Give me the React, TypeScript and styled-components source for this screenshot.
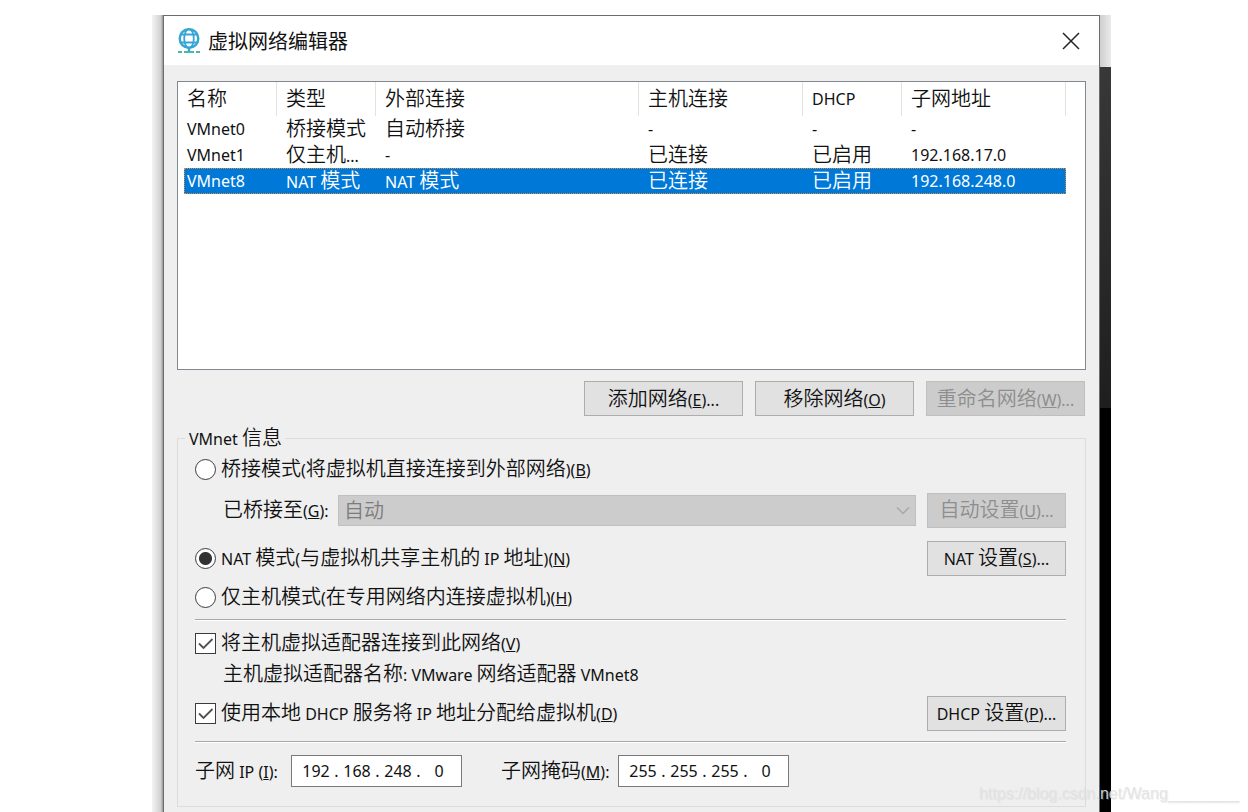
import React from "react";
import styled, { createGlobalStyle } from "styled-components";

const latin = '"Noto Sans", "Noto Sans CJK SC", sans-serif';
const han = '"Noto Sans CJK SC", "Noto Sans", sans-serif';

const GlobalStyle = createGlobalStyle`
  * { box-sizing: border-box; }
  body {
    margin: 0;
    background: #fff;
    color: #111;
    font-family: ${latin};
    font-size: 16px;
    line-height: 24px;
  }
`;

const Page = styled.div`
  position: relative;
  display: flex;
  min-height: 100vh;
  padding: 15px 137px 0 152px;
`;

const LeftBackdrop = styled.div`
  flex: none;
  width: 11px;
  background: linear-gradient(to right, #f3f3f3, #d0d0d0 9px, #a4a4a4 10px);
`;

const RightBackdrop = styled.div`
  flex: none;
  width: 11px;
  background:
    linear-gradient(to right, #cfcfcf, #eaeaea) 0 0 / 100% 52px no-repeat,
    linear-gradient(#383838, #1e1e1e) 0 52px / 100% 341px no-repeat,
    #000;
`;

const Dialog = styled.main`
  flex: 1;
  min-width: 0;
  display: flex;
  flex-direction: column;
  border: 1px solid #6c6c6c;
  border-bottom: 0;
  background: #efefef;
`;

const TitleBar = styled.header`
  display: flex;
  align-items: center;
  height: 49px;
  padding: 0 15px 0 13px;
  background: #fff;
`;

const Title = styled.h1`
  flex: 1;
  margin: 0 0 0 7px;
  font: 400 20px/28px ${han};
`;

const CloseButton = styled.button`
  display: grid;
  place-items: center;
  width: 26px;
  height: 26px;
  padding: 0;
  border: 0;
  background: none;
`;

const Body = styled.div`
  display: flex;
  flex-direction: column;
  padding: 16px 13px 6px;
`;

const ListBox = styled.div`
  height: 289px;
  padding: 0 19px 0 6px;
  border: 1px solid #828790;
  background: #fff;
`;

const Table = styled.table`
  width: 100%;
  table-layout: fixed;
  border-collapse: separate;
  border-spacing: 0;
  text-align: left;
`;

const HeadCell = styled.th`
  height: 34px;
  padding: 0 0 0 9px;
  border-right: 1px solid #e2e2e2;
  font-weight: 400;
  white-space: nowrap;
  &:first-child { padding-left: 3px; }
`;

const Row = styled.tr<{ $selected?: boolean }>`
  background: ${(p) => (p.$selected ? "#0078d7" : "transparent")};
  color: ${(p) => (p.$selected ? "#fff" : "inherit")};
  outline: ${(p) => (p.$selected ? "1px dotted #e08a3c" : "none")};
  outline-offset: -1px;
`;

const Cell = styled.td`
  height: 26px;
  padding: 0 0 0 9px;
  white-space: nowrap;
  &:first-child { padding-left: 3px; }
`;

const Han = styled.span`
  font-family: ${han};
  font-size: 20px;
  font-weight: 350;
`;

const ButtonBar = styled.div`
  display: flex;
  justify-content: flex-end;
  gap: 12px;
  margin: 11px 1px 8px 0;
`;

const Button = styled.button<{ $width: number }>`
  flex: none;
  width: ${(p) => p.$width}px;
  height: 35px;
  margin-left: auto;
  padding: 0;
  border: 1px solid #adadad;
  background: #e1e1e1;
  color: #111;
  font: 400 16px/24px ${latin};
  white-space: nowrap;
  &:disabled {
    border-color: #bfbfbf;
    background: #ccc;
    color: #8e8e8e;
  }
  ${ButtonBar} & { margin-left: 0; }
`;

const Group = styled.fieldset`
  min-width: 0;
  margin: 0;
  padding: 0 19px 18px 17px;
  border: 1px solid #dcdcdc;
`;

const Legend = styled.legend`
  height: 28px;
  margin-left: -10px;
  padding: 0 3px 0 4px;
  line-height: 26px;
`;

const Line = styled.div<{ $gap?: number; $height?: number; $indent?: number }>`
  display: flex;
  align-items: center;
  height: ${(p) => p.$height ?? 34}px;
  margin-top: ${(p) => p.$gap ?? 0}px;
  padding-left: ${(p) => p.$indent ?? 0}px;
  white-space: nowrap;
`;

const FieldLabel = styled.label<{ $width: number }>`
  flex: none;
  width: ${(p) => p.$width}px;
`;

const Rule = styled.hr<{ $gap: number }>`
  height: 2px;
  margin: ${(p) => p.$gap}px 0 0;
  border: 0;
  border-top: 1px solid #a8a8a8;
  background: #fff;
`;

const Radio = styled.input`
  appearance: none;
  flex: none;
  width: 21px;
  height: 21px;
  margin: 0 5px 0 0;
  border: 1px solid #3c3c3c;
  border-radius: 50%;
  background: #fff;
  &:checked { background: radial-gradient(circle, #303234 6px, #fff 7px); }
`;

const CheckFrame = styled.span`
  display: grid;
  flex: none;
  margin-right: 5px;
  & > * { grid-area: 1 / 1; }
  & > svg { pointer-events: none; }
`;

const CheckInput = styled.input`
  appearance: none;
  width: 21px;
  height: 21px;
  margin: 0;
  border: 1px solid #3c3c3c;
  background: #fff;
`;

const SelectFrame = styled.span`
  display: grid;
  flex: 1;
  align-items: center;
  margin: 0 11px 0 7px;
  & > * { grid-area: 1 / 1; }
  & > svg { justify-self: end; margin-right: 6px; pointer-events: none; }
`;

const Select = styled.select`
  appearance: none;
  width: 100%;
  height: 31px;
  padding: 0 24px 0 5px;
  border: 1px solid #bfbfbf;
  border-radius: 0;
  background: #ccc;
  color: #7c7c7c;
  opacity: 1;
  font: 350 20px/28px ${han};
`;

const AddressFrame = styled.div`
  display: flex;
  align-items: center;
  width: 171px;
  height: 32px;
  margin: 0 39px 0 6px;
  padding-left: 7px;
  border: 1px solid #7a7a7a;
  background: #fff;
`;

const Octet = styled.input`
  width: 34px;
  padding: 0;
  border: 0;
  background: none;
  color: #111;
  font: 400 16px/24px ${latin};
  text-align: center;
`;

const Dot = styled.span`
  width: 7px;
  text-align: center;
`;

const Watermark = styled.div`
  position: absolute;
  right: 9px;
  bottom: 7px;
  color: rgba(226, 226, 226, 0.9);
  font: 400 16px/24px "Liberation Sans", sans-serif;
  text-shadow: 1px 1px 1px rgba(200, 200, 200, 0.3);
`;

/* Chinese runs are set larger than the Latin ones; _X_ marks an access key. */
function Text({ children }: { children: string }) {
  const parts = children.split(/([\u4e00-\u9fff]+|_[A-Z]_)/).filter(Boolean);
  return (
    <span>
      {parts.map((part, i) => {
        if (/^[\u4e00-\u9fff]/.test(part)) return <Han key={i}>{part}</Han>;
        if (/^_[A-Z]_$/.test(part)) return <u key={i}>{part[1]}</u>;
        return part;
      })}
    </span>
  );
}

function GlobeIcon() {
  return (
    <svg width="24" height="26" viewBox="0 0 24 26" fill="none" aria-hidden="true">
      <g stroke="#35a5d6" strokeWidth="2.400">
        <circle cx="12" cy="10.500" r="9.300" />
        <ellipse cx="12" cy="10.500" rx="4.800" ry="9.300" strokeWidth="1.800" />
        <path d="M3.500 6.500h17M3.500 14.500h17" strokeWidth="1.800" />
      </g>
      <path d="M12 20v4" stroke="#35a5d6" strokeWidth="2.400" />
      <path d="M1 24h4M7 24h10M19 24h4" stroke="#4bb8a6" strokeWidth="2" />
    </svg>
  );
}

function Check({ id }: { id: string }) {
  return (
    <CheckFrame>
      <CheckInput id={id} type="checkbox" defaultChecked />
      <svg width="21" height="21" viewBox="0 0 21 21" fill="none" aria-hidden="true">
        <path d="M4 10.500l4.500 4.500L17.500 6" stroke="#505050" strokeWidth="1.800" />
      </svg>
    </CheckFrame>
  );
}

function Address({ id, name, octets }: { id: string; name: string; octets: string[] }) {
  return (
    <AddressFrame role="group" aria-label={name}>
      {octets.map((octet, i) => (
        <React.Fragment key={i}>
          {i > 0 && <Dot>.</Dot>}
          <Octet id={i === 0 ? id : undefined} aria-label={`${name} ${i + 1}`} defaultValue={octet} />
        </React.Fragment>
      ))}
    </AddressFrame>
  );
}

const columns = ["名称", "类型", "外部连接", "主机连接", "DHCP", "子网地址"];
const rows = [
  ["VMnet0", "桥接模式", "自动桥接", "-", "-", "-"],
  ["VMnet1", "仅主机...", "-", "已连接", "已启用", "192.168.17.0"],
  ["VMnet8", "NAT 模式", "NAT 模式", "已连接", "已启用", "192.168.248.0"],
];

const Column = styled.col<{ $width?: number }>`
  width: ${(p) => (p.$width ? `${p.$width}px` : "auto")};
`;

export default function App() {
  return (
    <>
      <GlobalStyle />
      <Page>
        <LeftBackdrop />
        <Dialog>
          <TitleBar>
            <GlobeIcon />
            <Title>虚拟网络编辑器</Title>
            <CloseButton aria-label="关闭">
              <svg width="18" height="18" viewBox="0 0 18 18" fill="none" aria-hidden="true">
                <path d="M1 1l16 16M17 1L1 17" stroke="#222" strokeWidth="1.500" />
              </svg>
            </CloseButton>
          </TitleBar>
          <Body>
            <ListBox>
              <Table>
                <colgroup>
                  <Column $width={93} />
                  <Column $width={99} />
                  <Column />
                  <Column $width={164} />
                  <Column $width={99} />
                  <Column $width={164} />
                </colgroup>
                <thead>
                  <tr>
                    {columns.map((c) => (
                      <HeadCell key={c} scope="col"><Text>{c}</Text></HeadCell>
                    ))}
                  </tr>
                </thead>
                <tbody>
                  {rows.map((r, n) => (
                    <Row key={r[0]} $selected={n === 2}>
                      {r.map((c, i) => (
                        <Cell key={i}><Text>{c}</Text></Cell>
                      ))}
                    </Row>
                  ))}
                </tbody>
              </Table>
            </ListBox>
            <ButtonBar>
              <Button $width={159}><Text>添加网络(_E_)...</Text></Button>
              <Button $width={159}><Text>移除网络(_O_)</Text></Button>
              <Button $width={159} disabled><Text>重命名网络(_W_)...</Text></Button>
            </ButtonBar>
            <Group>
              <Legend><Text>VMnet 信息</Text></Legend>
              <Line>
                <Radio id="bridged" type="radio" name="mode" />
                <label htmlFor="bridged"><Text>桥接模式(将虚拟机直接连接到外部网络)(_B_)</Text></label>
              </Line>
              <Line $gap={7} $indent={28}>
                <FieldLabel $width={108} htmlFor="adapter"><Text>已桥接至(_G_):</Text></FieldLabel>
                <SelectFrame>
                  <Select id="adapter" disabled>
                    <option>自动</option>
                  </Select>
                  <svg width="14" height="9" viewBox="0 0 14 9" fill="none" aria-hidden="true">
                    <path d="M1 1.500l6 6 6-6" stroke="#a8a8a8" strokeWidth="1.500" />
                  </svg>
                </SelectFrame>
                <Button $width={139} disabled><Text>自动设置(_U_)...</Text></Button>
              </Line>
              <Line $gap={14}>
                <Radio id="nat" type="radio" name="mode" defaultChecked />
                <label htmlFor="nat"><Text>NAT 模式(与虚拟机共享主机的 IP 地址)(_N_)</Text></label>
                <Button $width={139}><Text>NAT 设置(_S_)...</Text></Button>
              </Line>
              <Line $gap={5}>
                <Radio id="hostonly" type="radio" name="mode" />
                <label htmlFor="hostonly"><Text>仅主机模式(在专用网络内连接虚拟机)(_H_)</Text></label>
              </Line>
              <Rule $gap={5} />
              <Line $gap={5}>
                <Check id="connect" />
                <label htmlFor="connect"><Text>将主机虚拟适配器连接到此网络(_V_)</Text></label>
              </Line>
              <Line $height={28} $indent={28}>
                <Text>主机虚拟适配器名称: VMware 网络适配器 VMnet8</Text>
              </Line>
              <Line $gap={8}>
                <Check id="dhcp" />
                <label htmlFor="dhcp"><Text>使用本地 DHCP 服务将 IP 地址分配给虚拟机(_D_)</Text></label>
                <Button $width={139}><Text>DHCP 设置(_P_)...</Text></Button>
              </Line>
              <Rule $gap={11} />
              <Line $gap={11}>
                <FieldLabel $width={90} htmlFor="subnet-ip"><Text>子网 IP (_I_):</Text></FieldLabel>
                <Address id="subnet-ip" name="子网 IP" octets={["192", "168", "248", "0"]} />
                <FieldLabel $width={111} htmlFor="subnet-mask"><Text>子网掩码(_M_):</Text></FieldLabel>
                <Address id="subnet-mask" name="子网掩码" octets={["255", "255", "255", "0"]} />
              </Line>
            </Group>
          </Body>
        </Dialog>
        <RightBackdrop />
        <Watermark>https://blog.csdn.net/Wang________</Watermark>
      </Page>
    </>
  );
}
